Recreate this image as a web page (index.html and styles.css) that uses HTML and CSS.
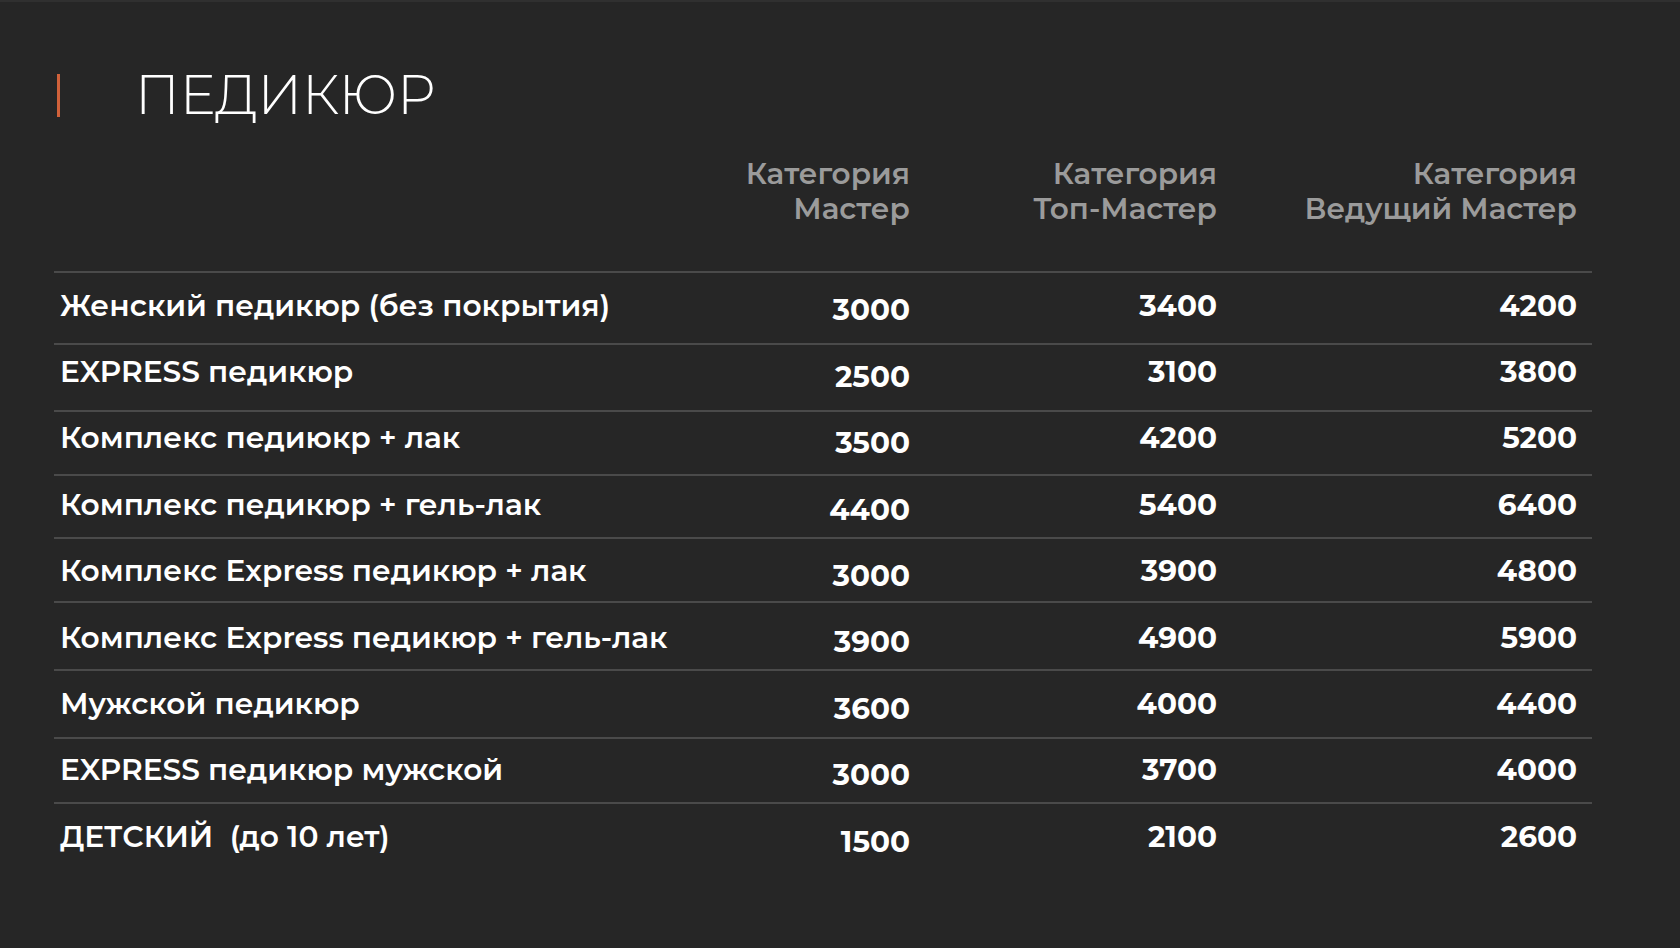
FILE: index.html
```html
<!DOCTYPE html>
<html lang="ru">
<head>
<meta charset="utf-8">
<title>Педикюр</title>
<link rel="stylesheet" href="styles.css">
</head>
<body>
<div class="page">
  <div class="title-row">
    <span class="accent"></span>
    <h1 class="title">ПЕДИКЮР</h1>
  </div>
  <div class="head">
    <div class="h-spacer"></div>
    <div class="h-cell">Категория<br>Мастер</div>
    <div class="h-cell">Категория<br>Топ-Мастер</div>
    <div class="h-cell">Категория<br>Ведущий Мастер</div>
  </div>
  <div class="table">
    <div class="row"><div class="label">Женский педикюр (без покрытия)</div><div class="v c1">3000</div><div class="v">3400</div><div class="v">4200</div></div>
    <div class="row"><div class="label">EXPRESS педикюр</div><div class="v c1">2500</div><div class="v">3100</div><div class="v">3800</div></div>
    <div class="row"><div class="label">Комплекс педиюкр + лак</div><div class="v c1">3500</div><div class="v">4200</div><div class="v">5200</div></div>
    <div class="row"><div class="label">Комплекс педикюр + гель-лак</div><div class="v c1">4400</div><div class="v">5400</div><div class="v">6400</div></div>
    <div class="row"><div class="label">Комплекс Express педикюр + лак</div><div class="v c1">3000</div><div class="v">3900</div><div class="v">4800</div></div>
    <div class="row"><div class="label">Комплекс Express педикюр + гель-лак</div><div class="v c1">3900</div><div class="v">4900</div><div class="v">5900</div></div>
    <div class="row"><div class="label">Мужской педикюр</div><div class="v c1">3600</div><div class="v">4000</div><div class="v">4400</div></div>
    <div class="row"><div class="label">EXPRESS педикюр мужской</div><div class="v c1">3000</div><div class="v">3700</div><div class="v">4000</div></div>
    <div class="row"><div class="label">ДЕТСКИЙ&nbsp; (до 10 лет)</div><div class="v c1">1500</div><div class="v">2100</div><div class="v">2600</div></div>
  </div>
</div>
</body>
</html>
```
FILE: styles.css
```css
* { box-sizing: border-box; }
html, body { margin: 0; padding: 0; }
body {
  background: #262626;
  font-family: "Montserrat", "Inter", "DejaVu Sans", sans-serif;
  color: #ffffff;
  height: 948px;
  overflow: hidden;
}
.page {
  border-top: 2px solid #303030;
  padding: 63px 88px 0 54px;
}
.title-row {
  display: flex;
  align-items: center;
  height: 60px;
}
.accent {
  width: 3px;
  height: 43px;
  margin-left: 3px;
  background: #d0613a;
  flex: none;
}
.title {
  margin: 0 0 0 75px;
  font-size: 54px;
  font-weight: 300;
  line-height: 60px;
  color: #ffffff;
}
.head, .row {
  display: grid;
  grid-template-columns: 596px 260px 307px 360px;
  padding-right: 15px;
}
.head {
  margin-top: 30.5px;
  padding-bottom: 45.5px;
}
.h-cell {
  text-align: right;
  font-size: 29.5px;
  font-weight: 600;
  line-height: 35px;
  color: #9b9b9b;
  white-space: nowrap;
}
.row {
  border-top: 2px solid #4a4a4a;
  align-items: start;
}
.label {
  padding-left: 6px;
  font-size: 29.7px;
  font-weight: 600;
  line-height: 34px;
  white-space: nowrap;
}
.v {
  text-align: right;
  font-size: 29.5px;
  font-weight: 700;
  line-height: 34px;
}
.v.c1 { margin-top: 4.5px; }
.row:nth-child(1) { height: 72px;   padding-top: 14.5px; }
.row:nth-child(2) { height: 66.5px; padding-top: 9px; }
.row:nth-child(3) { height: 64px;   padding-top: 8.5px; }
.row:nth-child(4) { height: 63.5px; padding-top: 11.5px; }
.row:nth-child(5) { height: 64px;   padding-top: 14px; }
.row:nth-child(6) { height: 68px;   padding-top: 16.5px; }
.row:nth-child(7) { height: 68px;   padding-top: 15px; }
.row:nth-child(8) { height: 64.5px; padding-top: 13px; }
.row:nth-child(9) { height: 70px;   padding-top: 15.5px; }
```
